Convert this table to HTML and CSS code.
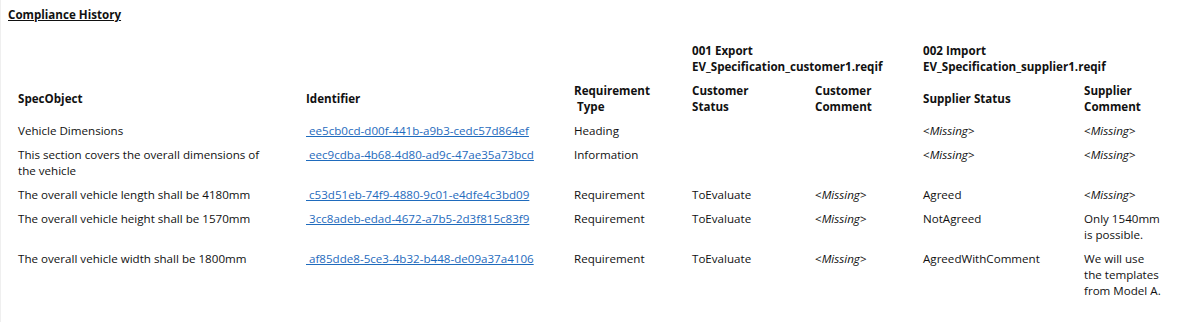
FILE: index.html
```html
<!DOCTYPE html>
<html lang="en">
<head>
  <meta charset="UTF-8" />
  <title>Compliance History</title>
  <link rel="stylesheet" href="styles.css">
</head>
<body>
  <div class="page">
    <h1 class="report-title">Compliance History</h1>

    <table class="history">
      <colgroup>
        <col class="col-spec">
        <col class="col-id">
        <col class="col-type">
        <col class="col-cstatus">
        <col class="col-ccomment">
        <col class="col-sstatus">
        <col class="col-scomment">
      </colgroup>
      <thead>
        <tr class="group-row">
          <th></th>
          <th></th>
          <th></th>
          <th colspan="2">001 Export<br>EV_Specification_customer1.reqif</th>
          <th colspan="2">002 Import<br>EV_Specification_supplier1.reqif</th>
        </tr>
        <tr class="head-row">
          <th>SpecObject</th>
          <th>Identifier</th>
          <th>Requirement<br>&nbsp;Type</th>
          <th>Customer<br>Status</th>
          <th>Customer<br>Comment</th>
          <th>Supplier Status</th>
          <th>Supplier<br>Comment</th>
        </tr>
      </thead>
      <tbody>
        <tr>
          <td>Vehicle Dimensions</td>
          <td><a href="#">&nbsp;ee5cb0cd-d00f-441b-a9b3-cedc57d864ef</a></td>
          <td>Heading</td>
          <td></td>
          <td></td>
          <td class="missing">&lt;<i>Missing</i>&gt;</td>
          <td class="missing">&lt;<i>Missing</i>&gt;</td>
        </tr>
        <tr>
          <td>This section covers the overall dimensions of the vehicle</td>
          <td><a href="#">&nbsp;eec9cdba-4b68-4d80-ad9c-47ae35a73bcd</a></td>
          <td>Information</td>
          <td></td>
          <td></td>
          <td class="missing">&lt;<i>Missing</i>&gt;</td>
          <td class="missing">&lt;<i>Missing</i>&gt;</td>
        </tr>
        <tr>
          <td>The overall vehicle length shall be 4180mm</td>
          <td><a href="#">&nbsp;c53d51eb-74f9-4880-9c01-e4dfe4c3bd09</a></td>
          <td>Requirement</td>
          <td>ToEvaluate</td>
          <td class="missing">&lt;<i>Missing</i>&gt;</td>
          <td>Agreed</td>
          <td class="missing">&lt;<i>Missing</i>&gt;</td>
        </tr>
        <tr>
          <td>The overall vehicle height shall be 1570mm</td>
          <td><a href="#">&nbsp;3cc8adeb-edad-4672-a7b5-2d3f815c83f9</a></td>
          <td>Requirement</td>
          <td>ToEvaluate</td>
          <td class="missing">&lt;<i>Missing</i>&gt;</td>
          <td>NotAgreed</td>
          <td>Only 1540mm is possible.</td>
        </tr>
        <tr>
          <td>The overall vehicle width shall be 1800mm</td>
          <td><a href="#">&nbsp;af85dde8-5ce3-4b32-b448-de09a37a4106</a></td>
          <td>Requirement</td>
          <td>ToEvaluate</td>
          <td class="missing">&lt;<i>Missing</i>&gt;</td>
          <td>AgreedWithComment</td>
          <td>We will use the templates from Model A.</td>
        </tr>
      </tbody>
    </table>
  </div>
</body>
</html>
```

FILE: styles.css
```css
* {
  margin: 0;
  padding: 0;
  box-sizing: border-box;
}
html, body {
  height: 100%;
}
body {
  font-family: 'Open Sans', 'Noto Sans', sans-serif;
  font-size: 11.6px;
  line-height: 16px;
  color: #111;
  background: #fff;
  overflow: hidden;
}
.page {
  min-height: 100%;
  padding: 7px 0 0 7px;
  border-left: 1px solid #efefef;
}
.report-title {
  font-size: 11.6px;
  font-weight: 700;
  text-decoration: underline;
  line-height: 16px;
  margin-bottom: 15px;
}
.history {
  border-collapse: collapse;
  table-layout: fixed;
  width: 1161px;
}
.col-spec { width: 288px; }
.col-id { width: 268px; }
.col-type { width: 118px; }
.col-cstatus { width: 123px; }
.col-ccomment { width: 108px; }
.col-sstatus { width: 161px; }
.col-scomment { width: 95px; }
.history th,
.history td {
  padding: 4px 10px;
  text-align: left;
  vertical-align: top;
}
.history th {
  font-weight: 700;
}
.group-row th {
  padding-top: 5px;
}
.head-row th {
  vertical-align: middle;
}
.history td:first-child {
  padding-right: 28px;
}
.history td:last-child {
  padding-right: 5px;
}
.history a {
  color: #1f6bbd;
  text-decoration: underline;
}
.missing i {
  font-style: italic;
}
```
